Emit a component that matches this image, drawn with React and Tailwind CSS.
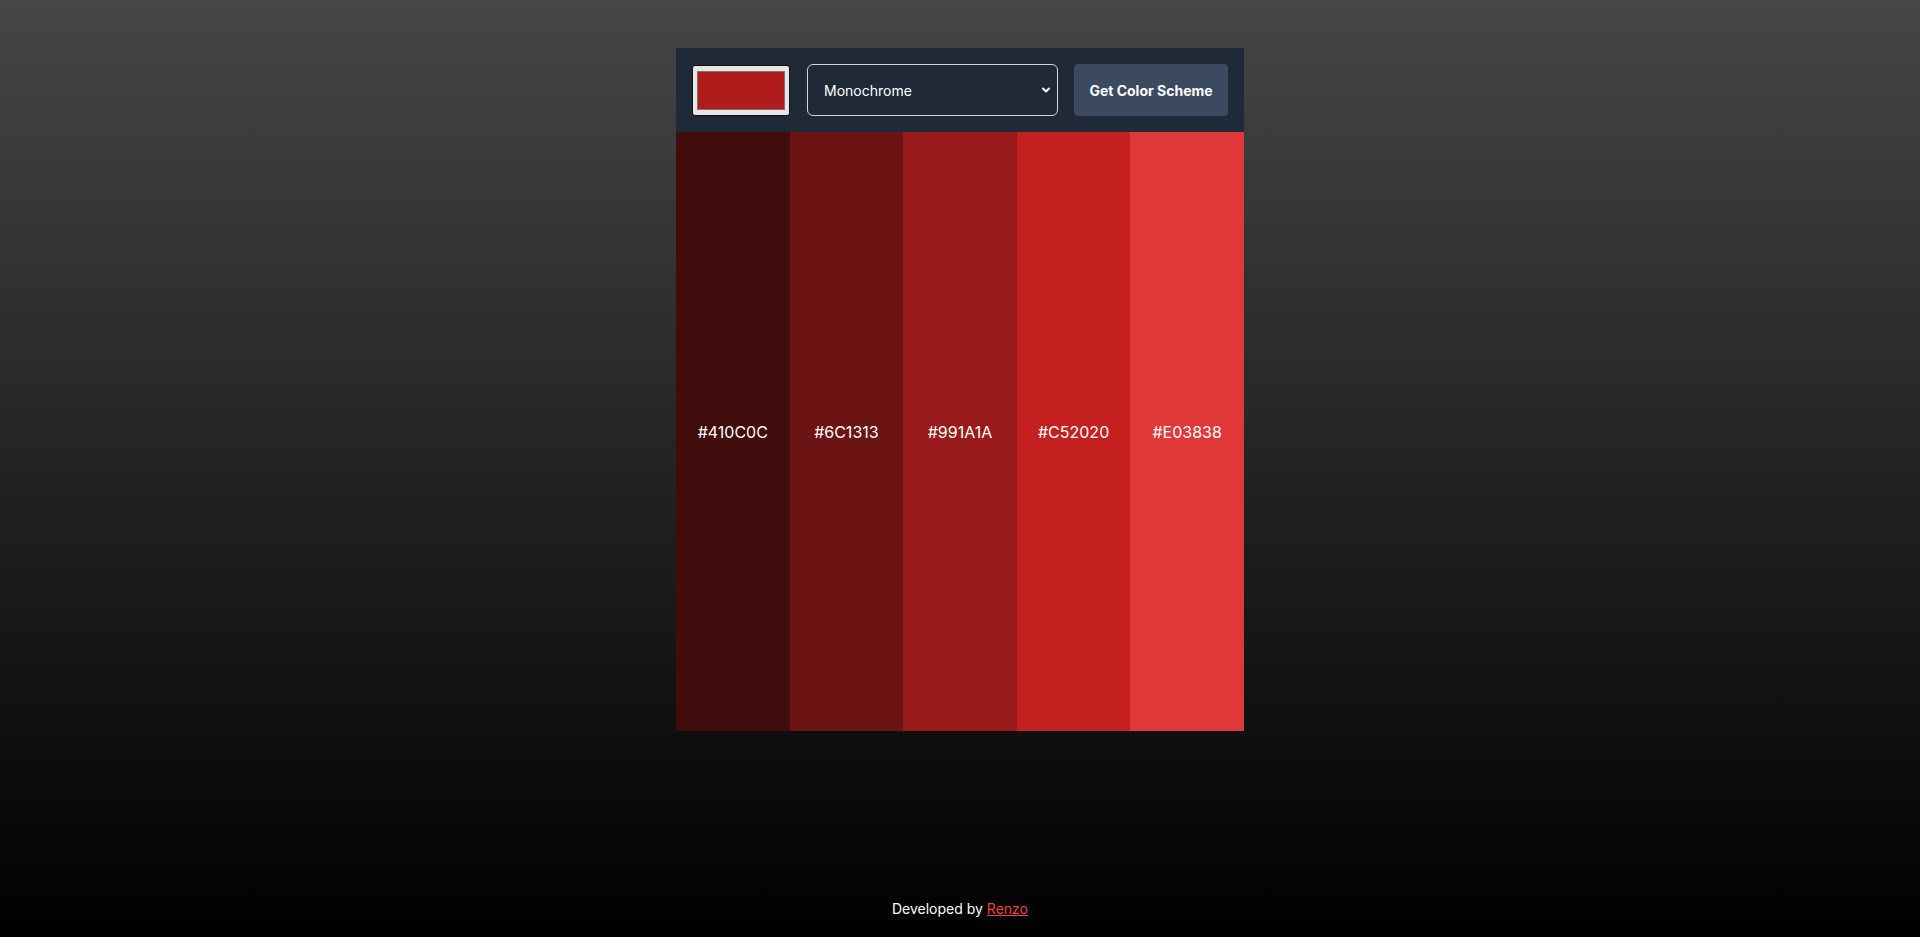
import { useState } from 'react'

const scheme = ['#410C0C', '#6C1313', '#991A1A', '#C52020', '#E03838']

export default function App() {
  const [seed, setSeed] = useState('#b01c1c')
  const [mode, setMode] = useState('monochrome')

  return (
    <div
      className="min-h-screen flex flex-col items-center bg-[linear-gradient(to_bottom,#464646,#000000)] text-white"
      style={{ fontFamily: 'Inter, "Noto Sans", sans-serif' }}
    >
      <main className="flex-1 w-full flex justify-center pt-12">
        <div className="w-[568px] h-[683px] flex flex-col">
          {/* Controls */}
          <header className="bg-[#1f2937] p-4 flex items-center gap-4">
            <input
              type="color"
              value={seed}
              onChange={(e) => setSeed(e.target.value)}
              className="shrink-0 w-[98px] h-[51px] cursor-pointer bg-[#e6e6e6] border border-[#111111] rounded-[3px] px-[2px] py-[1px] [&::-webkit-color-swatch-wrapper]:px-[2px] [&::-webkit-color-swatch-wrapper]:py-[4px] [&::-webkit-color-swatch]:border [&::-webkit-color-swatch]:border-[#777777] [&::-webkit-color-swatch]:rounded-none"
            />
            <div className="relative flex-1 min-w-0 ml-[1px]">
              <select
                value={mode}
                onChange={(e) => setMode(e.target.value)}
                className="appearance-none w-full h-[52px] bg-[#1f2937] border border-[#d1d5db] rounded-md pl-4 pr-8 text-[14px] text-white outline-none"
              >
                <option value="monochrome">Monochrome</option>
                <option value="monochrome-dark">Monochrome Dark</option>
                <option value="monochrome-light">Monochrome Light</option>
                <option value="analogic">Analogic</option>
                <option value="complement">Complement</option>
                <option value="triad">Triad</option>
              </select>
              <svg
                className="absolute right-[7px] top-1/2 -translate-y-1/2 w-[10px] h-[10px] pointer-events-none"
                viewBox="0 0 10 10"
                fill="none"
                stroke="white"
                strokeWidth="2"
                strokeLinecap="round"
                strokeLinejoin="round"
              >
                <path d="M2 3.5 L5 6.5 L8 3.5" />
              </svg>
            </div>
            <button className="shrink-0 w-[154px] h-[52px] bg-[#3c4a61] rounded-[4px] text-[14px] font-bold text-white">
              Get Color Scheme
            </button>
          </header>

          {/* Palette */}
          <section className="flex-1 grid grid-cols-5">
            {scheme.map((hex) => (
              <div
                key={hex}
                className="flex items-center justify-center text-[16px] text-white"
                style={{ backgroundColor: hex }}
              >
                {hex}
              </div>
            ))}
          </section>
        </div>
      </main>

      <footer className="pb-[18px] text-[14px] leading-5">
        Developed by{' '}
        <a href="#" className="text-[#ef4444] underline">
          Renzo
        </a>
      </footer>
    </div>
  )
}
